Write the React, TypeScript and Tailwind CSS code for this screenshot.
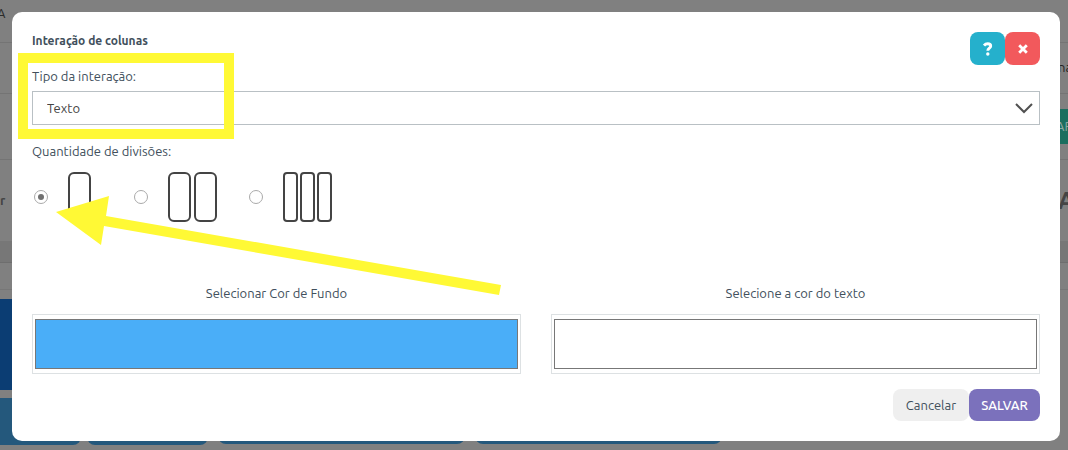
import React, { useState } from 'react';

const divisions = [
    { value: 1, label: 'Uma coluna', item: 'w-[100px]', group: 'gap-[3px]', box: 'w-[23px] rounded-md' },
    { value: 2, label: 'Duas colunas', item: 'w-[115px]', group: 'gap-[3px]', box: 'w-[23px] rounded-md' },
    { value: 3, label: 'Três colunas', item: 'w-[100px]', group: 'gap-[2px]', box: 'w-[15px] rounded' },
];

// Editor page that stays behind the modal
const PageBehind = () => (
    <div className="flex flex-col min-h-screen overflow-hidden bg-[#808080] text-[13px]" aria-hidden="true">
        <div className="h-[43px] border-b border-[#747474] pt-1 text-[#2b2b2b]">
            <span className="-ml-[3px]">A</span>
        </div>
        <div className="flex justify-end items-center h-[51px] border-b border-[#747474] text-[#222222]">
            <span className="w-[10px] whitespace-nowrap">na</span>
        </div>
        <div className="flex justify-end items-center h-[66px] border-b border-[#747474]">
            <span className="w-[12px] h-[35px] leading-[35px] bg-[#1b6e5f] text-[#8fa8a2] whitespace-nowrap">AR</span>
        </div>
        <div className="flex justify-between items-center h-[81px] text-[#444444]">
            <span className="w-[12px] font-bold">r</span>
            <span className="w-[10px] text-2xl font-bold">A</span>
        </div>
        <div className="h-[22px] bg-[#777777] border-b border-[#6e6e6e]" />
        <div className="h-[27px] border-b border-[#777777]" />
        <div className="h-[9px]" />
        <div className="w-1/2 h-[91px] bg-[#0b3d73]" />
        <div className="flex items-start gap-[10px] pt-2">
            <div className="flex gap-[6px]">
                <div className="w-[81px] h-[47px] bg-[#24587c] rounded-br-lg" />
                <div className="w-[121px] h-[47px] bg-[#24587c] rounded-b-lg" />
            </div>
            <div className="w-[247px] h-[46px] bg-[#24587c] rounded-b-lg" />
            <div className="w-[247px] h-[46px] bg-[#24587c] rounded-b-lg" />
        </div>
    </div>
);

const ColorField = ({ id, label, value, onChange }: { id: string; label: string; value: string; onChange: (value: string) => void }) => (
    <div className="flex-1 flex flex-col">
        <label htmlFor={id} className="text-center leading-5 mb-[11px]">{label}</label>
        <input
            id={id}
            type="color"
            value={value}
            onChange={(e) => onChange(e.target.value)}
            className="w-full h-[60px] px-[2px] py-1 bg-white border border-[#dde1e3] appearance-none [&::-webkit-color-swatch-wrapper]:p-0 [&::-webkit-color-swatch]:rounded-none [&::-webkit-color-swatch]:border [&::-webkit-color-swatch]:border-[#777777]"
        />
    </div>
);

const App = () => {
    const [type, setType] = useState('texto');
    const [division, setDivision] = useState(1);
    const [background, setBackground] = useState('#4aaef8');
    const [color, setColor] = useState('#ffffff');

    return (
        <div className="relative font-['Ubuntu','Noto_Sans',sans-serif]">
            <PageBehind />
            <div className="absolute inset-0 pl-3 pr-2 pt-3">
                <div role="dialog" aria-labelledby="modal-title" className="relative bg-white rounded-[10px] p-5 text-[13px] text-[#414f5c]">
                    {/* Header */}
                    <div className="flex justify-between items-start h-[34px]">
                        <h1 id="modal-title" className="text-xs font-bold leading-[18px]">Interação de colunas</h1>
                        <div className="flex text-white">
                            <button type="button" aria-label="Ajuda" className="flex justify-center items-center w-[35px] h-[33px] rounded-lg bg-[#25b0cc]">
                                <svg width="10" height="14" viewBox="0 0 10 14" fill="none" stroke="currentColor" strokeWidth="2.9">
                                    <path d="M1 3.6C2 2.3 3.2 1.8 4.7 1.8C6.6 1.8 7.7 2.6 7.7 3.9C7.7 6.1 4.8 6 4.8 8.8" />
                                    <circle cx="4.8" cy="12" r="0.8" strokeWidth="1.8" />
                                </svg>
                            </button>
                            <button type="button" aria-label="Fechar" className="flex justify-center items-center w-[35px] h-[33px] rounded-lg bg-[#f2595c]">
                                <svg width="10" height="10" viewBox="0 0 10 10" stroke="currentColor" strokeWidth="2.8">
                                    <path d="M1.2 1.2L8.8 8.8M8.8 1.2L1.2 8.8" />
                                </svg>
                            </button>
                        </div>
                    </div>

                    {/* Interaction type */}
                    <label htmlFor="type" className="block leading-5 mb-[5px]">Tipo da interação:</label>
                    <div className="relative">
                        <select
                            id="type"
                            value={type}
                            onChange={(e) => setType(e.target.value)}
                            className="block w-full h-[34px] px-[14px] pt-[2px] bg-white border border-[#b9c0c4] text-[#444444] appearance-none"
                        >
                            <option value="texto">Texto</option>
                            <option value="imagem">Imagem</option>
                        </select>
                        <svg className="absolute right-[7px] top-3 text-[#505050] pointer-events-none" width="18" height="11" viewBox="0 0 18 11" fill="none" stroke="currentColor" strokeWidth="2">
                            <path d="M1 1L9 9L17 1" />
                        </svg>
                    </div>

                    {/* Number of columns */}
                    <fieldset className="mt-4">
                        <legend className="leading-5">Quantidade de divisões:</legend>
                        <div className="flex pt-[11px] pl-[2px]">
                            {divisions.map((option) => (
                                <label key={option.value} className={`flex items-center gap-5 ${option.item}`}>
                                    <input
                                        type="radio"
                                        name="division"
                                        aria-label={option.label}
                                        checked={division === option.value}
                                        onChange={() => setDivision(option.value)}
                                        className="flex justify-center items-center w-[14px] h-[14px] rounded-full border border-[#aaaaaa] bg-white appearance-none checked:before:block checked:before:w-[6px] checked:before:h-[6px] checked:before:rounded-full checked:before:bg-[#707070]"
                                    />
                                    <span className={`flex ${option.group}`}>
                                        {Array.from({ length: option.value }, (_, i) => (
                                            <span key={i} className={`h-[50px] border-2 border-[#444444] ${option.box}`} />
                                        ))}
                                    </span>
                                </label>
                            ))}
                        </div>
                    </fieldset>

                    {/* Colors */}
                    <div className="flex gap-[30px] mt-[61px]">
                        <ColorField id="background" label="Selecionar Cor de Fundo" value={background} onChange={setBackground} />
                        <ColorField id="color" label="Selecione a cor do texto" value={color} onChange={setColor} />
                    </div>

                    {/* Footer */}
                    <div className="flex justify-end mt-[15px]">
                        <button type="button" className="w-[76px] h-8 pt-[2px] rounded-lg bg-[#efefef]">Cancelar</button>
                        <button type="button" className="w-[71px] h-8 pt-[2px] rounded-lg bg-[#7b71bc] text-white font-medium">SALVAR</button>
                    </div>

                    {/* Tutorial highlight */}
                    <div className="absolute left-[6px] top-[41px] w-[216px] h-[86px] border-10 border-[#fff935] pointer-events-none" />
                    <svg className="absolute left-[44px] top-[184px] pointer-events-none" width="446" height="100" viewBox="0 0 446 100" fill="#fff935">
                        <path d="M0 16L53 0L50 20L445 89L443 99L48 30L45 49Z" />
                    </svg>
                </div>
            </div>
        </div>
    );
};

export default App;
